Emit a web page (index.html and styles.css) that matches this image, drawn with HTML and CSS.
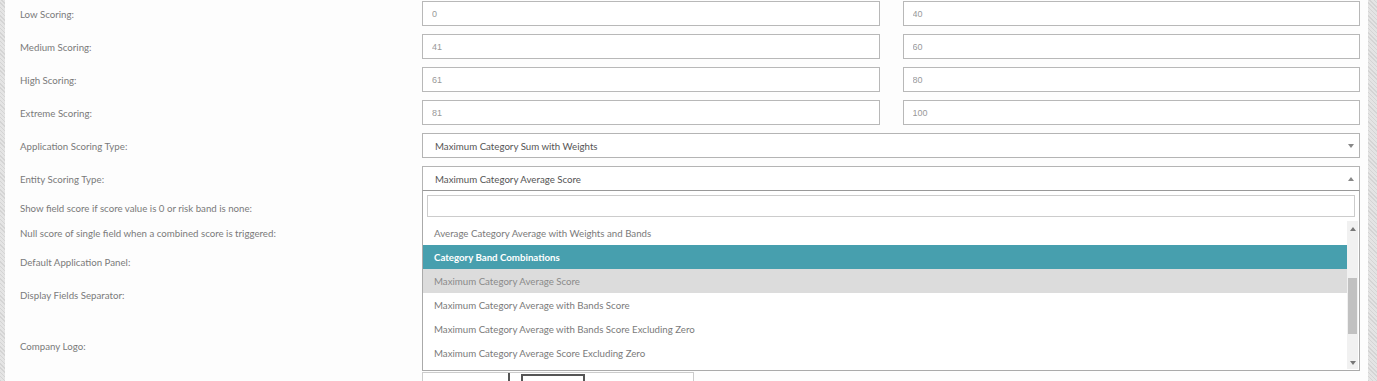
FILE: index.html
```html
<!DOCTYPE html>
<html lang="en">
<head>
    <meta charset="UTF-8">
    <meta name="viewport" content="width=device-width, initial-scale=1.0">
    <title>Scoring Settings</title>
    <link rel="stylesheet" href="styles.css">
</head>
<body>
    <div class="page">
        <div class="strip"></div>

        <div class="panel">
            <div class="row">
                <label class="label">Low Scoring:</label>
                <div class="field pair">
                    <input class="text-input" type="text" value="0">
                    <input class="text-input" type="text" value="40">
                </div>
            </div>

            <div class="row">
                <label class="label">Medium Scoring:</label>
                <div class="field pair">
                    <input class="text-input" type="text" value="41">
                    <input class="text-input" type="text" value="60">
                </div>
            </div>

            <div class="row">
                <label class="label">High Scoring:</label>
                <div class="field pair">
                    <input class="text-input" type="text" value="61">
                    <input class="text-input" type="text" value="80">
                </div>
            </div>

            <div class="row">
                <label class="label">Extreme Scoring:</label>
                <div class="field pair">
                    <input class="text-input" type="text" value="81">
                    <input class="text-input" type="text" value="100">
                </div>
            </div>

            <div class="row">
                <label class="label">Application Scoring Type:</label>
                <div class="field">
                    <div class="select">
                        <span>Maximum Category Sum with Weights</span>
                        <span class="arrow down"></span>
                    </div>
                </div>
            </div>

            <div class="row">
                <label class="label">Entity Scoring Type:</label>
                <div class="field select-wrap">
                    <div class="select open">
                        <span>Maximum Category Average Score</span>
                        <span class="arrow up"></span>
                    </div>

                    <!-- Lista desplegada del select -->
                    <div class="dropdown">
                        <input class="search" type="text">
                        <div class="list-box">
                            <ul class="options">
                                <li>Average Category Average with Weights and Bands</li>
                                <li class="highlighted">Category Band Combinations</li>
                                <li class="selected">Maximum Category Average Score</li>
                                <li>Maximum Category Average with Bands Score</li>
                                <li>Maximum Category Average with Bands Score Excluding Zero</li>
                                <li>Maximum Category Average Score Excluding Zero</li>
                            </ul>
                            <div class="scrollbar">
                                <span class="arrow up"></span>
                                <div class="thumb"></div>
                                <span class="arrow down"></span>
                            </div>
                        </div>
                    </div>
                </div>
            </div>

            <div class="row check-row">
                <label class="label">Show field score if score value is 0 or risk band is none:</label>
                <div class="field"><input type="checkbox"></div>
            </div>

            <div class="row check-row">
                <label class="label">Null score of single field when a combined score is triggered:</label>
                <div class="field"><input type="checkbox"></div>
            </div>

            <div class="row">
                <label class="label">Default Application Panel:</label>
                <div class="field">
                    <div class="select">
                        <span></span>
                        <span class="arrow down"></span>
                    </div>
                </div>
            </div>

            <div class="row">
                <label class="label">Display Fields Separator:</label>
                <div class="field">
                    <input class="text-input" type="text">
                </div>
            </div>

            <div class="row logo-row">
                <label class="label">Company Logo:</label>
                <div class="field">
                    <input class="text-input" type="text">
                    <div class="logo-preview">
                        <div class="logo-frame"><div class="logo-box"></div></div>
                        <span class="logo-mark"></span>
                    </div>
                </div>
            </div>
        </div>

        <div class="strip right"></div>
    </div>
</body>
</html>
```

FILE: styles.css
```css
/* Base */
body {
    margin: 0;
    font-family: Lato, "Open Sans", sans-serif;
    color: #777;
    overflow: hidden;
}

.page {
    display: flex;
    height: 381px;
    overflow: hidden;
}

/* Bandas laterales con textura */
.strip {
    width: 5px;
    flex-shrink: 0;
    background-color: #dcdcdc;
    background-image: repeating-linear-gradient(45deg, #d4d4d4 0 1px, #e4e4e4 1px 3px);
}

.strip.right {
    width: 9px;
}

.panel {
    flex: 1;
    background-color: #fdfdfd;
    padding: 1px 8px 0 15px;
}

/* Filas del formulario */
.row {
    display: flex;
    align-items: center;
    margin-bottom: 8px;
}

.label {
    width: 402px;
    flex-shrink: 0;
    font-size: 9.7px;
    color: #7a7a7a;
}

.field {
    flex: 1;
}

.pair {
    display: grid;
    grid-template-columns: 1fr 1fr;
    gap: 23px;
}

.text-input {
    box-sizing: border-box;
    width: 100%;
    height: 25px;
    border: 1px solid #b8b8b8;
    background: #fff;
    padding: 0 9px;
    font-family: "Liberation Sans", Arial, sans-serif;
    font-size: 9px;
    color: #999;
    outline: none;
}

/* Selects */
.select {
    box-sizing: border-box;
    height: 25px;
    border: 1px solid #b4b4b4;
    background: #fff;
    display: flex;
    align-items: center;
    justify-content: space-between;
    padding: 0 5px 0 12px;
    font-size: 9.7px;
    color: #555;
}

.select.open {
    border-bottom-color: #999;
}

.arrow {
    width: 0;
    height: 0;
    border-left: 3px solid transparent;
    border-right: 3px solid transparent;
}

.arrow.down {
    border-top: 4px solid #888;
}

.arrow.up {
    border-bottom: 4px solid #888;
}

.select-wrap {
    position: relative;
}

.dropdown {
    position: absolute;
    top: 25px;
    left: 0;
    right: 0;
    z-index: 10;
    box-sizing: border-box;
    background: #fff;
    border: 1px solid #aaa;
    border-top: none;
    padding: 4px 1px 1px 0;
}

.search {
    display: block;
    box-sizing: border-box;
    width: calc(100% - 7px);
    height: 22px;
    margin: 0 0 4px 4px;
    border: 1px solid #ccc;
    outline: none;
}

.list-box {
    display: flex;
    height: 148px;
}

.options {
    flex: 1;
    list-style: none;
    margin: 0;
    padding: 0;
    overflow: hidden;
}

.options li {
    height: 24px;
    line-height: 24px;
    padding-left: 11px;
    font-size: 9.7px;
    color: #7a7a7a;
    white-space: nowrap;
}

.options li.highlighted {
    background-color: #479fae;
    color: #fff;
    font-weight: bold;
}

.options li.selected {
    background-color: #dcdcdc;
    color: #8a8a8a;
}

/* Barra de desplazamiento */
.scrollbar {
    width: 11px;
    background-color: #f1f1f1;
    display: flex;
    flex-direction: column;
    align-items: center;
    padding: 6px 0 4px;
    box-sizing: border-box;
}

.scrollbar .arrow.up {
    border-bottom-color: #777;
}

.scrollbar .arrow.down {
    border-top-color: #777;
}

.thumb {
    width: 9px;
    height: 56px;
    background-color: #c1c1c1;
    margin: 47px 0 auto;
}

/* Casillas */
.check-row {
    height: 18px;
    margin-bottom: 7px;
}

.check-row input {
    margin: 0;
}

/* Logo */
.logo-row {
    align-items: flex-start;
}

.logo-row .label {
    margin-top: 24px;
}

.logo-preview {
    width: 272px;
    height: 60px;
    margin-top: 31px;
    box-sizing: border-box;
    border: 1px solid #ccc;
    background: #fff;
    display: flex;
    align-items: flex-start;
}

.logo-frame {
    margin-left: 85px;
    height: 100%;
    border-left: 2px solid #555;
    padding: 1px 0 0 11px;
}

.logo-box {
    width: 60px;
    height: 40px;
    border: 2px solid #555;
}

.logo-mark {
    width: 4px;
    height: 1px;
    margin: 8px 0 0 17px;
    background: #888;
}
```
